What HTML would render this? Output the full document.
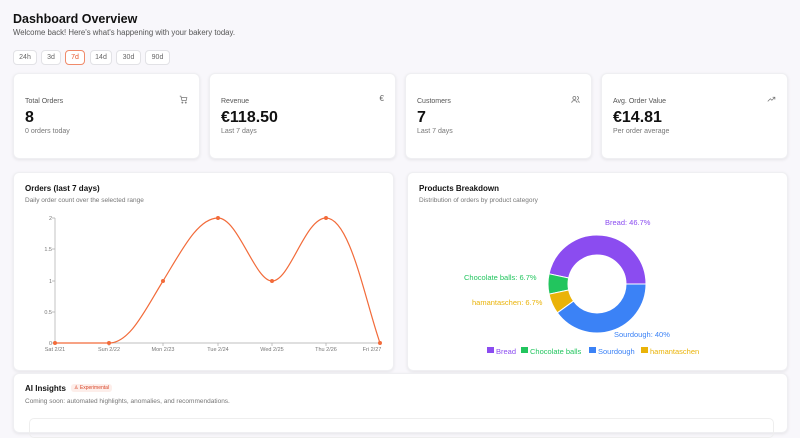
<!DOCTYPE html>
<html><head><meta charset="utf-8"><style>
*{box-sizing:border-box;margin:0;padding:0}
body{width:800px;height:421px;overflow:hidden;background:#f8f7fb;font-family:"Liberation Sans",sans-serif;color:#111;position:relative}
.abs{position:absolute}
h1{position:absolute;left:13px;top:12px;font-size:12.5px;font-weight:bold;color:#111}
.sub{position:absolute;left:13px;top:28px;font-size:7.8px;color:#555}
.btn{position:absolute;top:50px;height:15px;border:1px solid #e2e2e6;border-radius:4px;background:#fff;font-size:7px;color:#666;text-align:center;line-height:13px}
.card{position:absolute;background:#fff;border-radius:6px;box-shadow:0 1px 3px rgba(0,0,0,.08);border:1px solid #efeff2}
.lbl{position:absolute;left:11px;top:24px;font-size:7px;color:#555}
.val{position:absolute;left:11px;top:35px;font-size:16px;font-weight:bold;color:#111}
.note{position:absolute;left:11px;top:54px;font-size:7px;color:#777}
.ico{position:absolute;right:11px;top:21px}
.ct{position:absolute;left:11px;top:11px;font-size:8px;font-weight:bold}
.cs{position:absolute;left:11px;top:24px;font-size:6.5px;color:#777}
</style></head><body>
<h1>Dashboard Overview</h1>
<div class="sub">Welcome back! Here's what's happening with your bakery today.</div>
<div class="btn" style="left:13px;width:24px">24h</div>
<div class="btn" style="left:41px;width:20px">3d</div>
<div class="btn" style="left:65px;width:20px;border-color:#f08a6a;color:#e8552a">7d</div>
<div class="btn" style="left:90px;width:22px">14d</div>
<div class="btn" style="left:116px;width:25px">30d</div>
<div class="btn" style="left:145px;width:25px">90d</div>

<div class="card" style="left:13px;top:73px;width:187px;height:86px">
<div class="lbl">Total Orders</div><div class="val">8</div><div class="note">0 orders today</div>
<svg class="ico" width="9" height="9" viewBox="0 0 24 24" fill="none" stroke="#777" stroke-width="2"><path d="M2 3h3l3 12h11l2-8H7"/><circle cx="9" cy="20" r="1.5"/><circle cx="18" cy="20" r="1.5"/></svg></div>
<div class="card" style="left:209px;top:73px;width:187px;height:86px">
<div class="lbl">Revenue</div><div class="val">€118.50</div><div class="note">Last 7 days</div>
<div class="ico" style="font-size:8px;color:#666;top:20px">€</div></div>
<div class="card" style="left:405px;top:73px;width:187px;height:86px">
<div class="lbl">Customers</div><div class="val">7</div><div class="note">Last 7 days</div>
<svg class="ico" width="9" height="9" viewBox="0 0 24 24" fill="none" stroke="#777" stroke-width="2"><circle cx="9" cy="8" r="4"/><path d="M2 21c0-4 3-6 7-6s7 2 7 6M16 4a4 4 0 0 1 0 8M22 21c0-3-2-5-4-6"/></svg></div>
<div class="card" style="left:601px;top:73px;width:187px;height:86px">
<div class="lbl">Avg. Order Value</div><div class="val">€14.81</div><div class="note">Per order average</div>
<svg class="ico" width="9" height="9" viewBox="0 0 24 24" fill="none" stroke="#777" stroke-width="2"><path d="M2 17l7-7 4 4 8-8M15 6h6v6"/></svg></div>

<div class="card" style="left:13px;top:172px;width:381px;height:199px">
<div class="ct">Orders (last 7 days)</div><div class="cs">Daily order count over the selected range</div></div>
<div class="card" style="left:407px;top:172px;width:381px;height:199px">
<div class="ct">Products Breakdown</div><div class="cs">Distribution of orders by product category</div></div>
<div class="card" style="left:13px;top:373px;width:775px;height:60px">
<div class="ct" style="top:10px">AI Insights</div>
<div class="abs" style="left:57px;top:10px;font-size:5px;color:#d9482b;background:#fdeeea;padding:1px 3px;border-radius:3px">♙ Experimental</div>
<div class="cs" style="top:24px">Coming soon: automated highlights, anomalies, and recommendations.</div>
<div class="abs" style="left:15px;top:44px;width:745px;height:20px;border:1px solid #eee;border-radius:5px"></div></div>

<svg class="abs" style="left:0;top:0" width="800" height="421">
<g font-size="5.5" fill="#777" font-family="Liberation Sans" text-anchor="end">
<text x="52" y="220">2</text><text x="52" y="251">1.5</text><text x="52" y="283">1</text><text x="52" y="314">0.5</text><text x="52" y="345">0</text></g>
<path d="M55 218V343H380" stroke="#aaa" stroke-width="0.7" fill="none"/>
<g stroke="#aaa" stroke-width="0.7"><path d="M52 218h3M52 249h3M52 281h3M52 312h3M52 343h3M109 343v3M163 343v3M218 343v3M272 343v3M326 343v3"/></g>
<g font-size="5.5" fill="#777" font-family="Liberation Sans" text-anchor="middle">
<text x="55" y="351">Sat 2/21</text><text x="109" y="351">Sun 2/22</text><text x="163" y="351">Mon 2/23</text><text x="218" y="351">Tue 2/24</text><text x="272" y="351">Wed 2/25</text><text x="326" y="351">Thu 2/26</text><text x="372" y="351">Fri 2/27</text></g>
<path d="M55 343L109 343C130 343 145 310 163 281C182 250 198 218 218 218C238 218 255 281 272 281C290 281 305 218 326 218C350 218 365 300 380 343" stroke="#f26b3a" stroke-width="1.2" fill="none"/>
<g fill="#f26b3a"><circle cx="55" cy="343" r="2"/><circle cx="109" cy="343" r="2"/><circle cx="163" cy="281" r="2"/><circle cx="218" cy="218" r="2"/><circle cx="272" cy="281" r="2"/><circle cx="326" cy="218" r="2"/><circle cx="380" cy="343" r="2"/></g>
<g id="donut" stroke="#fff" stroke-width="1"></g>
<g font-size="7.5" font-family="Liberation Sans">
<text x="605" y="225" fill="#8b4cf0">Bread: 46.7%</text>
<text x="464" y="280" fill="#22c55e">Chocolate balls: 6.7%</text>
<text x="472" y="305" fill="#eab308">hamantaschen: 6.7%</text>
<text x="614" y="337" fill="#3b82f6">Sourdough: 40%</text>
<rect x="487" y="347" width="7" height="6" fill="#8b4cf0"/><text x="496" y="354" fill="#8b4cf0">Bread</text>
<rect x="521" y="347" width="7" height="6" fill="#22c55e"/><text x="530" y="354" fill="#22c55e">Chocolate balls</text>
<rect x="589" y="347" width="7" height="6" fill="#3b82f6"/><text x="598" y="354" fill="#3b82f6">Sourdough</text>
<rect x="641" y="347" width="7" height="6" fill="#eab308"/><text x="650" y="354" fill="#eab308">hamantaschen</text>
</g>
</svg>
<script>
(function(){
var cx=597,cy=284,R=49,r=29,segs=[[0,168,'#8b4cf0'],[168,192,'#22c55e'],[192,216,'#eab308'],[216,360,'#3b82f6']];
var g=document.getElementById('donut'),h='';
function p(a,rr){a=a*Math.PI/180;return (cx+rr*Math.cos(a)).toFixed(2)+' '+(cy-rr*Math.sin(a)).toFixed(2);}
segs.forEach(function(s){var a0=s[0],a1=s[1],l=(a1-a0)>180?1:0;
h+='<path fill="'+s[2]+'" d="M'+p(a0,R)+' A'+R+' '+R+' 0 '+l+' 0 '+p(a1,R)+' L'+p(a1,r)+' A'+r+' '+r+' 0 '+l+' 1 '+p(a0,r)+'Z"/>';});
g.innerHTML=h;})();
</script>
</body></html>
